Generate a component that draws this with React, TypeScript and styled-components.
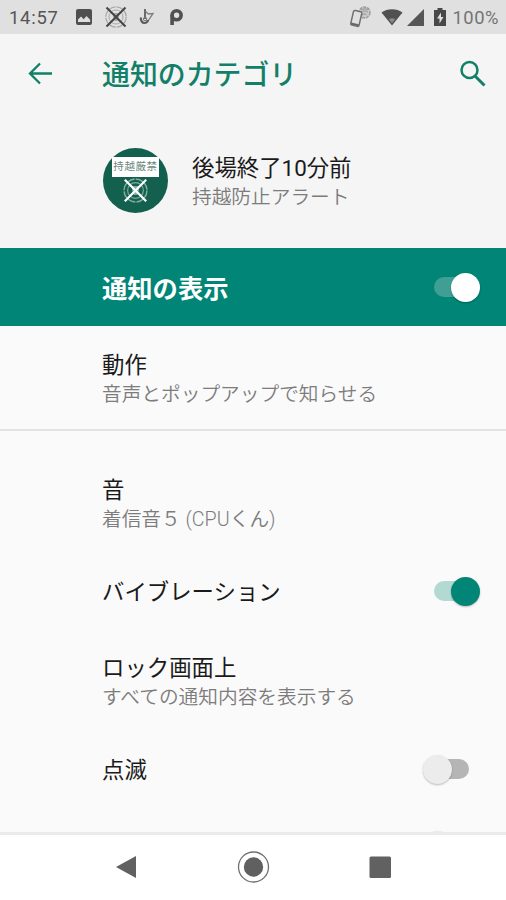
import React from 'react';
import styled, { createGlobalStyle } from 'styled-components';

const GlobalStyle = createGlobalStyle`
  *, *::before, *::after { box-sizing: border-box; }
  body {
    margin: 0;
    background: #fafafa;
    font-family: Roboto, 'Noto Sans CJK JP', sans-serif;
  }
`;

const Screen = styled.div`
  width: 506px;
  height: 900px;
  display: flex;
  flex-direction: column;
  overflow: hidden;
  background: #fafafa;
`;

const StatusBar = styled.header`
  flex: none;
  height: 34px;
  padding: 0 7px 0 9px;
  display: flex;
  align-items: center;
  justify-content: space-between;
  background: #e0e0e0;
  color: #555;
  font-size: 18.4px;
  line-height: 34px;
`;

const StatusGroup = styled.div`
  display: flex;
  align-items: center;
  height: 34px;
`;

const Clock = styled.span`
  width: 66px;
  letter-spacing: 0.75px;
  padding-top: 2px;
`;

const Percent = styled.span`
  letter-spacing: 0.5px;
  padding-top: 2px;
  color: #747474;
`;

const StatusIcon = styled.svg<{ $gap?: number }>`
  display: block;
  flex: none;
  margin-right: ${(p) => p.$gap ?? 0}px;
`;

const AppBar = styled.div`
  flex: none;
  height: 80px;
  padding: 0 18px 0 26px;
  display: flex;
  align-items: center;
  background: #f5f5f5;
`;

const BarIcon = styled.svg`
  display: block;
  flex: none;
`;

const Title = styled.h1`
  flex: 1;
  margin: 0;
  padding: 3px 0 0 48px;
  color: #128068;
  font-size: 27.9px;
  font-weight: 500;
  line-height: 40px;
`;

const AppHeader = styled.section`
  flex: none;
  height: 134px;
  padding: 34px 0 0 103px;
  display: flex;
  gap: 24px;
  background: #f5f5f5;
`;

const AppBadge = styled.div`
  width: 65px;
  height: 65px;
  border-radius: 50%;
  padding-top: 9px;
  display: flex;
  flex-direction: column;
  align-items: center;
  background: #14604e;
`;

const BadgeLabel = styled.div`
  flex: none;
  width: 47px;
  height: 20px;
  background: #fff;
  color: #6b877e;
  font-size: 10.5px;
  line-height: 20px;
  letter-spacing: 0.6px;
  text-align: center;
  white-space: nowrap;
`;

const AppNames = styled.div`
  padding-top: 5px;
`;

const TextStack = styled.div<{ $double?: boolean }>`
  flex: 1;
  display: flex;
  flex-direction: column;
  padding-top: ${(p) => (p.$double ? 4 : 2)}px;
`;

const Primary = styled.div`
  color: #1a1a1a;
  font-size: 22.4px;
  line-height: 30px;
  white-space: nowrap;
`;

const Secondary = styled.div`
  color: #7c7c7c;
  font-size: 19.7px;
  font-weight: 350;
  line-height: 29px;
  white-space: nowrap;
`;

const MasterRow = styled.section`
  flex: none;
  height: 78px;
  padding: 0 26px 0 102px;
  display: flex;
  align-items: center;
  justify-content: space-between;
  background: #018577;
  color: #fff;
  font-size: 25.3px;
  font-weight: 700;
`;

const Settings = styled.main`
  height: 509px;
  flex: none;
  overflow: hidden;
  border-bottom: 3px solid #ebebeb;
`;

const Row = styled.div<{ $height: number; $inset?: number; $divider?: boolean }>`
  height: ${(p) => p.$height}px;
  padding: 0 ${(p) => p.$inset ?? 26}px 0 102px;
  display: flex;
  align-items: center;
  justify-content: space-between;
  border-bottom: ${(p) => (p.$divider ? '2px solid #e3e3e3' : 'none')};
`;

type Tone = 'onDark' | 'on' | 'off';

const tones = {
  onDark: { track: '#409f94', thumb: '#fff' },
  on: { track: '#b3d9d3', thumb: '#018577' },
  off: { track: '#b5b5b5', thumb: '#ececec' },
};

const Switch = styled.div<{ $tone: Tone }>`
  flex: none;
  width: 46px;
  height: 29px;
  display: grid;
  align-items: center;
  justify-items: ${(p) => (p.$tone === 'off' ? 'start' : 'end')};

  &::before {
    content: '';
    grid-area: 1 / 1;
    justify-self: ${(p) => (p.$tone === 'off' ? 'end' : 'start')};
    width: 36px;
    height: 20px;
    border-radius: 10px;
    background: ${(p) => tones[p.$tone].track};
  }

  &::after {
    content: '';
    grid-area: 1 / 1;
    width: 29px;
    height: 29px;
    border-radius: 50%;
    background: ${(p) => tones[p.$tone].thumb};
    box-shadow: 0 1px 2px rgba(0, 0, 0, 0.25);
  }
`;

const NavBar = styled.nav`
  flex: 1;
  padding: 0 114px 2px 115px;
  display: flex;
  align-items: center;
  justify-content: space-between;
  background: #fff;
`;

function StruckTarget({ size, color, ring }: { size: number; color: string; ring: string }) {
  return (
    <svg width={size} height={size} viewBox="0 0 24 24" fill="none">
      <circle cx="12" cy="12" r="10.2" stroke={ring} strokeWidth="1.3" strokeDasharray="7 1" />
      <circle cx="12" cy="12" r="7" stroke={ring} strokeWidth="1" />
      <path d="M9 8h6v4l-1.5 4h-3L9 12z" fill={ring} />
      <path d="M2.5 2.5l19 19M21.5 2.5l-19 19" stroke={color} strokeWidth="2" />
    </svg>
  );
}

function Setting({ title, summary }: { title: string; summary?: string }) {
  return (
    <TextStack $double={Boolean(summary)}>
      <Primary>{title}</Primary>
      {summary && <Secondary>{summary}</Secondary>}
    </TextStack>
  );
}

export default function App() {
  return (
    <>
      <GlobalStyle />
      <Screen>
        <StatusBar>
          <StatusGroup>
            <Clock>14:57</Clock>
            <StatusIcon $gap={11} width="18" height="18" viewBox="0 0 18 18">
              <rect x="1" y="1" width="16" height="16" rx="2" fill="#4f4f4f" />
              <path d="M3 14v-2.5l3-3 2.7 2.7L11.5 8l3.7 3.7V14z" fill="#dedede" />
            </StatusIcon>
            <StruckTarget size={24} color="#444" ring="#a8a8a8" />
            <StatusIcon $gap={13} width="28" height="18" viewBox="0 0 28 18" fill="none">
              <path d="M17 1v10" stroke="#5c5c5c" strokeWidth="1.8" />
              <path d="M17.5 3.5l3 2.5 4.5-.5-5 7.5" stroke="#7c7c7c" strokeWidth="1.3" />
              <path d="M12.8 9.5c0 4 1.5 5.5 3.7 5.5 2 0 3-1 3.5-3" stroke="#5b5b5b" strokeWidth="2.2" />
              <circle cx="17" cy="11" r="1.7" stroke="#777" />
            </StatusIcon>
            <StatusIcon width="16" height="18" viewBox="0 0 16 18" fill="none">
              <circle cx="7.6" cy="7.2" r="4.5" stroke="#505050" strokeWidth="3.6" />
              <path d="M3.1 7v10" stroke="#505050" strokeWidth="3.6" />
            </StatusIcon>
          </StatusGroup>
          <StatusGroup>
            <StatusIcon $gap={9} width="24" height="24" viewBox="0 0 24 24" fill="none">
              <circle cx="16.5" cy="7.5" r="5.5" fill="#cacaca" stroke="#959595" strokeWidth="1.3" strokeDasharray="3 1" />
              <path d="M13 7.5c2-2 5-2 7 0M14 10c1.5-1.5 3-1.5 4.5 0M13 5c2.5-1.5 5-1.5 7 0" stroke="#909090" />
              <rect x="4" y="6" width="8.5" height="15" rx="1.5" transform="rotate(13 8.5 13.5)" fill="#e0e0e0" stroke="#707070" strokeWidth="1.5" />
              <path d="M3 18.5l7.5 1.8" stroke="#676767" strokeWidth="2" />
            </StatusIcon>
            <StatusIcon $gap={4} width="22" height="18" viewBox="0 0 22 18">
              <path d="M.5 4.5C6 0 16 0 21.5 4.5L11 17.5z" fill="#505050" />
              <path d="M7.8 11.2c2-1.4 4.4-1.4 6.4 0L11 15.2z" fill="#8a8a8a" />
            </StatusIcon>
            <StatusIcon $gap={10} width="17" height="17" viewBox="0 0 17 17">
              <path d="M17 0v17H0z" fill="#555" />
            </StatusIcon>
            <StatusIcon $gap={7} width="12" height="20" viewBox="0 0 12 20">
              <path d="M3.5 1h5v2H12v16H0V3h3.5z" fill="#484848" />
              <path d="M7 5.5L3 11.5h2.5v5L9.5 10H7z" fill="#e0e0e0" />
            </StatusIcon>
            <Percent>100%</Percent>
          </StatusGroup>
        </StatusBar>

        <AppBar>
          <BarIcon width="28" height="28" viewBox="0 0 28 28" fill="none" stroke="#128068" strokeWidth="2.3">
            <path d="M26 13.5H4M14 3.5L4 13.5l10 10" />
          </BarIcon>
          <Title>通知のカテゴリ</Title>
          <BarIcon width="30" height="30" viewBox="0 0 30 30" fill="none" stroke="#128068">
            <circle cx="11.5" cy="11" r="8" strokeWidth="2.5" />
            <path d="M17 17l9.5 9.5" strokeWidth="3" />
          </BarIcon>
        </AppBar>

        <AppHeader>
          <AppBadge>
            <BadgeLabel>持越厳禁</BadgeLabel>
            <StruckTarget size={27} color="#fff" ring="#7fae9f" />
          </AppBadge>
          <AppNames>
            <Primary>後場終了10分前</Primary>
            <Secondary>持越防止アラート</Secondary>
          </AppNames>
        </AppHeader>

        <MasterRow>
          通知の表示
          <Switch $tone="onDark" />
        </MasterRow>

        <Settings>
          <Row $height={105} $divider>
            <Setting title="動作" summary="音声とポップアップで知らせる" />
          </Row>
          <Row $height={20} />
          <Row $height={102}>
            <Setting title="音" summary="着信音５ (CPUくん)" />
          </Row>
          <Row $height={76}>
            <Setting title="バイブレーション" />
            <Switch $tone="on" />
          </Row>
          <Row $height={102}>
            <Setting title="ロック画面上" summary="すべての通知内容を表示する" />
          </Row>
          <Row $height={76} $inset={37}>
            <Setting title="点滅" />
            <Switch $tone="off" />
          </Row>
          <Row $height={76} $inset={37}>
            <Setting title="" />
            <Switch $tone="off" />
          </Row>
        </Settings>

        <NavBar>
          <svg width="22" height="24" viewBox="0 0 22 24">
            <path d="M21 1v22L1 12z" fill="#616161" />
          </svg>
          <svg width="34" height="34" viewBox="0 0 34 34" fill="none">
            <circle cx="17.5" cy="17" r="15" stroke="#707070" strokeWidth="1.3" />
            <circle cx="17.5" cy="17" r="9.7" fill="#606060" />
          </svg>
          <svg width="24" height="24" viewBox="0 0 24 24">
            <rect x="1.5" y="1.5" width="21.5" height="21.5" rx="1.5" fill="#616161" />
          </svg>
        </NavBar>
      </Screen>
    </>
  );
}
